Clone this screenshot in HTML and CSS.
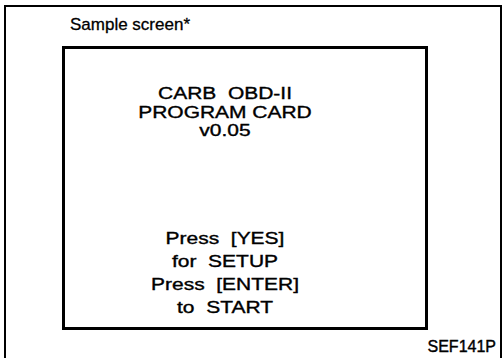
FILE: index.html
```html
<!DOCTYPE html>
<html lang="en">
<head>
    <meta charset="UTF-8">
    <meta name="viewport" content="width=device-width, initial-scale=1.0">
    <title>Sample screen</title>
    <link rel="stylesheet" href="styles.css">
</head>
<body>
    <div id="figureFrame">
        <p id="figureTitle">Sample screen*</p>

        <div id="screenBox">
            <div class="screen-lines screen-top">
                <p>CARB&nbsp; OBD-II</p>
                <p>PROGRAM CARD</p>
                <p>v0.05</p>
            </div>
            <div class="screen-lines screen-bottom">
                <p>Press&nbsp; [YES]</p>
                <p>for&nbsp; SETUP</p>
                <p>Press&nbsp; [ENTER]</p>
                <p>to&nbsp; START</p>
            </div>
        </div>

        <p id="figureCode">SEF141P</p>
    </div>
</body>
</html>
```

FILE: styles.css
```css
body {
    margin: 0;
    background-color: #fff;
    color: #000;
    font-family: "Liberation Sans", Arial, Helvetica, sans-serif;
}

p {
    margin: 0;
}

/* Outer figure frame, open at the bottom */
#figureFrame {
    display: flex;
    flex-direction: column;
    box-sizing: border-box;
    width: 498px;
    min-height: 353px;
    margin: 5px 0 0 4px;
    padding-top: 8px;
    border-top: 2px solid #000;
    border-left: 2px solid #000;
    border-right: 2px solid #000;
}

#figureTitle {
    margin-left: 64px;
    font-size: 17px;
    line-height: 20px;
    -webkit-text-stroke: 0.3px #000;
}

/* The handheld tester display */
#screenBox {
    display: flex;
    flex-direction: column;
    justify-content: space-between;
    box-sizing: border-box;
    width: 366px;
    height: 284px;
    margin: 11px 0 0 56px;
    padding: 36px 40px 8px 0; /* text sits left of the box centre */
    border: 3px solid #000;
    text-align: center;
}

/* scanned lettering is wider than it is tall */
.screen-lines {
    font-size: 16px;
    transform: scaleX(1.31);
    -webkit-text-stroke: 0.35px #000;
}

.screen-top {
    line-height: 18.5px;
}

.screen-bottom {
    line-height: 23px;
}

#figureCode {
    align-self: flex-end;
    margin-top: 8px;
    margin-right: 4px;
    font-size: 16px;
    line-height: 18px;
    -webkit-text-stroke: 0.4px #000;
}
```
